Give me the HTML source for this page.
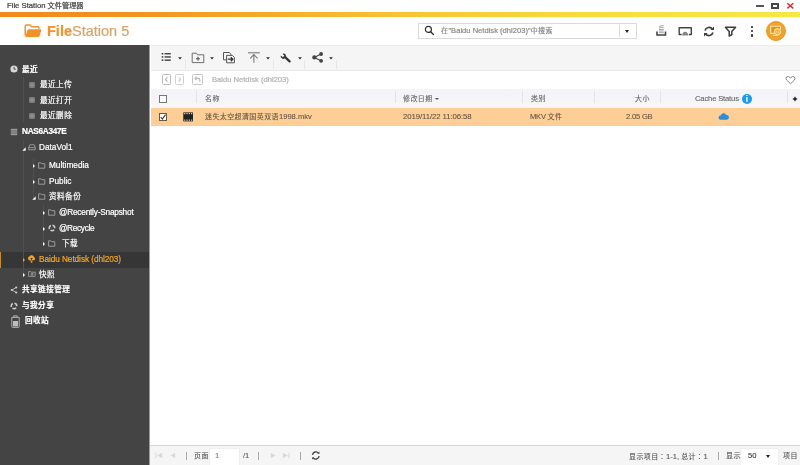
<!DOCTYPE html>
<html lang="zh-CN">
<head>
<meta charset="utf-8">
<title>File Station 文件管理器</title>
<style>
*{box-sizing:border-box;margin:0;padding:0}
html,body{width:800px;height:465px;overflow:hidden;background:#fff}
body{font-family:"Liberation Sans","Noto Sans CJK SC",sans-serif;font-size:8px;color:#444;position:relative}
.abs{position:absolute}
.t{position:absolute;white-space:nowrap;line-height:10px;will-change:transform;-webkit-text-stroke:0.2px currentColor}
#gbar{left:0;top:12px;width:800px;height:5px;background:linear-gradient(90deg,#f08a1c 0%,#f29420 18%,#f7c434 50%,#f8dd3a 75%,#f7e844 100%)}
#side{left:0;top:45px;width:150px;height:420px;background:#444;border-right:1px solid #9c9c9c}
#toolbar{left:151px;top:45px;width:649px;height:25.5px;background:#f5f5f5;border-top:1px solid #ebebeb;border-bottom:1px solid #e9e9e9}
#thead{left:151px;top:89px;width:649px;height:19px;background:linear-gradient(#f3f4f8 0%,#f5f5f8 55%,#faf7f5 100%)}
#row{left:151px;top:107.75px;width:649px;height:18px;background:#fdcf97;border-bottom:1.5px solid #f8cfa3}
#footer{left:150px;top:445px;width:650px;height:20px;background:#f5f5f5;border-top:1px solid #d6d6d6}
.st{color:#fff;font-size:8.25px}
.sb{font-weight:bold}
.colsep{position:absolute;top:90.5px;width:1px;height:12.5px;background:#e3e3e3}
.hd{color:#666;font-size:7.6px;-webkit-text-stroke-width:0.1px}
.rw{color:#655442;font-size:7.6px;-webkit-text-stroke-width:0.1px}
.ft{color:#555;font-size:7.6px;-webkit-text-stroke-width:0.1px}
</style>
</head>
<body>
<div class="t" style="left:7px;top:0.6px;font-size:7.7px;color:#3a3a3a">File Station <span style="font-size:7.2px">文件管理器</span></div>
<div id="gbar" class="abs"></div>
<div id="side" class="abs"></div>
<div id="toolbar" class="abs"></div>
<div id="thead" class="abs"></div>
<div id="row" class="abs"></div>
<div id="footer" class="abs"></div>

<svg class="abs" style="left:24px;top:24px" width="18" height="14" viewBox="0 0 18 14">
<path d="M1.2 11.5V2.2Q1.2 1 2.4 1H6l1.6 1.7h6.2q1.2 0 1.2 1.2v0.9" fill="none" stroke="#f0922a" stroke-width="1.5" stroke-linejoin="round"/>
<path d="M4.6 5.2H16.6Q17.6 5.2 17.3 6.2L15.6 12Q15.3 13 14.3 13H2Q0.9 13 1.3 12L3.4 6.2Q3.7 5.2 4.6 5.2Z" fill="#f0922a"/>
</svg>
<div class="t" style="left:47px;top:20.6px;font-size:14.5px;line-height:20px;color:#d8a368"><b style="color:#ef9433">File</b>Station 5</div>
<div class="abs" style="left:418px;top:23px;width:219px;height:16px;border:1px solid #dadada;background:#fff"></div>
<div class="abs" style="left:619px;top:25px;width:1px;height:12px;background:#d8d8d8"></div>
<svg class="abs" style="left:424.2px;top:24.8px" width="11" height="11" viewBox="0 0 12 12"><circle cx="4.8" cy="4.8" r="3.3" fill="none" stroke="#333" stroke-width="1.3"/><path d="M7.3 7.3L10.3 10.3" stroke="#333" stroke-width="1.5" stroke-linecap="round"/></svg>

<div class="t" style="left:441px;top:25.5px;font-size:7.6px;color:#8a8a8a"><span style="font-size:6.96px;letter-spacing:0.44px">在</span>"Baidu Netdisk (dhl203)"<span style="font-size:6.96px;letter-spacing:0.44px">中搜索</span></div>
<div class="abs" style="left:625px;top:30px;width:0;height:0;border-left:2.5px solid transparent;border-right:2.5px solid transparent;border-top:3px solid #222"></div>
<div class="abs" style="left:756px;top:5px;width:8px;height:2px;background:#555"></div>
<div class="abs" style="left:771px;top:3px;width:8px;height:6px;border:2px solid #484848"></div>
<svg class="abs" style="left:786px;top:2px" width="9" height="9" viewBox="0 0 9 9"><path d="M1.3 1.2L7.3 6.4M7.3 1.2L1.3 6.4" stroke="#cc3338" stroke-width="1.4"/></svg>
<svg class="abs" style="left:655px;top:24px" width="13" height="13" viewBox="0 0 13 13" fill="none">
<path d="M4 2.3L8.6 1.4M3.9 3.9L8.8 3.3M3.9 5.5H8.8M3.9 7.1H8.8M3.9 8.7H8.8" stroke="#9a9a9a" stroke-width="0.9"/><path d="M2 7.6V11H10.5V7.6" stroke="#444" stroke-width="1.6"/></svg>
<svg class="abs" style="left:677px;top:26px" width="16" height="11" viewBox="0 0 16 11" fill="none">
<path d="M4.6 8.5H2.2V1.8H14.3V8.5H11.9" stroke="#444" stroke-width="1.4" stroke-linejoin="round"/><path d="M5.1 9.5Q5.6 5.8 8.2 5.8Q10.8 5.8 11.3 9.5Z" fill="#858585"/></svg>
<svg class="abs" style="left:703px;top:26px" width="12" height="11" viewBox="0 0 12 11" fill="none" stroke="#3e3e3e" stroke-width="1.7">
<path d="M2 4.4A4.2 4.2 0 0 1 9.2 2.9"/><path d="M10 6.6A4.2 4.2 0 0 1 2.8 8.1"/><path d="M11 0.4v3.6H7.4z" fill="#3e3e3e" stroke="none"/><path d="M1 10.6V7h3.6z" fill="#3e3e3e" stroke="none"/></svg>
<svg class="abs" style="left:724px;top:26px" width="13" height="11" viewBox="0 0 13 11" fill="none" stroke="#3e3e3e" stroke-width="1.5" stroke-linejoin="round">
<path d="M1.4 1.2h10.2L7.8 5.6v3.2l-2.6 1.2V5.6z"/></svg>
<div class="abs" style="left:750.5px;top:25.5px;width:2.7px;height:2.7px;background:#333;border-radius:0.8px"></div>
<div class="abs" style="left:750.5px;top:29.8px;width:2.7px;height:2.7px;background:#333;border-radius:0.8px"></div>
<div class="abs" style="left:750.5px;top:34.2px;width:2.7px;height:2.7px;background:#333;border-radius:0.8px"></div>
<div class="abs" style="left:766px;top:21px;width:20px;height:20px;border-radius:10px;background:#f0a02c;border:1px solid #ea9824"></div>
<svg class="abs" style="left:769px;top:24px" width="14" height="14" viewBox="0 0 14 14" fill="none" stroke="#ffe6a0" stroke-width="1.1">
<path d="M5.4 9.4H1.7V2.3H11.5V5.6" fill="#e3921f"/><circle cx="8.5" cy="7.8" r="2.9" fill="#eda02e"/><circle cx="8.6" cy="7.9" r="1.1" stroke-width="0.7"/><path d="M3.6 11.3H8.8" stroke-width="0.9"/></svg>

<div class="abs" style="left:0;top:252px;width:149px;height:15.5px;background:#363636"></div><div class="abs" style="left:0;top:252px;width:1px;height:15.5px;background:#c48f2c"></div>
<div class="abs" style="left:23px;top:140px;width:1px;height:136px;background:#4f4f4f"></div>
<div class="abs" style="left:23px;top:77px;width:1px;height:45px;background:#4f4f4f"></div>
<div class="abs" style="left:33px;top:158px;width:1px;height:40px;background:#505050"></div>
<div class="abs" style="left:43px;top:205px;width:1px;height:40px;background:#505050"></div>
<svg class="abs" style="left:10px;top:65px" width="8" height="8" viewBox="0 0 8 8"><circle cx="4" cy="4" r="3.6" fill="#d8d8d8"/><path d="M4 1.8V4.2H5.8" stroke="#444" stroke-width="0.9" fill="none"/></svg>
<div class="t st sb" style="left:22px;top:65.2px;"><span style="font-size:7.57px;letter-spacing:0.48px">最近</span></div>
<div class="abs" style="left:29px;top:81.7px;width:6px;height:6px;background:radial-gradient(#8e8e8e 20%,#6c6c6c 100%);border-radius:1.2px"></div>
<div class="t st" style="left:39.7px;top:80.10000000000001px;"><span style="font-size:7.57px;letter-spacing:0.48px">最近上传</span></div>
<div class="abs" style="left:29px;top:97.2px;width:6px;height:6px;background:radial-gradient(#8e8e8e 20%,#6c6c6c 100%);border-radius:1.2px"></div>
<div class="t st" style="left:39.7px;top:95.60000000000001px;"><span style="font-size:7.57px;letter-spacing:0.48px">最近打开</span></div>
<div class="abs" style="left:29px;top:112.5px;width:6px;height:6px;background:radial-gradient(#8e8e8e 20%,#6c6c6c 100%);border-radius:1.2px"></div>
<div class="t st" style="left:39.7px;top:110.9px;"><span style="font-size:7.57px;letter-spacing:0.48px">最近删除</span></div>
<svg class="abs" style="left:10px;top:127.5px" width="8" height="8" viewBox="0 0 8 8"><rect x="0.8" y="0.8" width="6.4" height="6.4" fill="#9a9a9a"/><path d="M0.8 3h6.4M0.8 5.1h6.4" stroke="#444" stroke-width="0.6"/></svg>
<div class="t st sb" style="left:22px;top:127.4px;letter-spacing:-0.3px">NAS6A347E</div>
<svg class="abs" style="left:22.0px;top:147.0px" width="4" height="4" viewBox="0 0 4 4"><path d="M3.7 0.3V3.7H0.3z" fill="#fff"/></svg>
<svg class="abs" style="left:28px;top:144.3px" width="8" height="7" viewBox="0 0 9 8"><path d="M0.7 4.2L2 0.9h5L8.3 4.2V6.6H0.7z M0.7 4.2H8.3" fill="none" stroke="#a8a8a8" stroke-width="0.9"/></svg>
<div class="t st" style="left:39px;top:143.4px;">DataVol1</div>
<div class="abs" style="left:33px;top:164.3px;width:0;height:0;border-top:2px solid transparent;border-bottom:2px solid transparent;border-left:2.5px solid #fff"></div>
<svg class="abs" style="left:38px;top:162.0px" width="8" height="7" viewBox="0 0 8 7"><path d="M0.6 6.2V0.8H2.8L3.6 1.7H6.8V6.2Z" fill="none" stroke="#a4a4a4" stroke-width="0.9"/></svg>
<div class="t st" style="left:49.2px;top:160.9px;">Multimedia</div>
<div class="abs" style="left:33px;top:180.10000000000002px;width:0;height:0;border-top:2px solid transparent;border-bottom:2px solid transparent;border-left:2.5px solid #fff"></div>
<svg class="abs" style="left:38px;top:177.8px" width="8" height="7" viewBox="0 0 8 7"><path d="M0.6 6.2V0.8H2.8L3.6 1.7H6.8V6.2Z" fill="none" stroke="#a4a4a4" stroke-width="0.9"/></svg>
<div class="t st" style="left:49.2px;top:176.70000000000002px;">Public</div>
<svg class="abs" style="left:32.0px;top:196.0px" width="4" height="4" viewBox="0 0 4 4"><path d="M3.7 0.3V3.7H0.3z" fill="#fff"/></svg>
<svg class="abs" style="left:38px;top:193.0px" width="8" height="7" viewBox="0 0 8 7"><path d="M0.6 6.2V0.8H2.8L3.6 1.7H6.8V6.2Z" fill="none" stroke="#a4a4a4" stroke-width="0.9"/></svg>
<div class="t st" style="left:49.2px;top:191.9px;"><span style="font-size:7.57px;letter-spacing:0.48px">资料备份</span></div>
<div class="abs" style="left:43px;top:211.10000000000002px;width:0;height:0;border-top:2px solid transparent;border-bottom:2px solid transparent;border-left:2.5px solid #fff"></div>
<svg class="abs" style="left:48px;top:208.8px" width="8" height="7" viewBox="0 0 8 7"><path d="M0.6 6.2V0.8H2.8L3.6 1.7H6.8V6.2Z" fill="none" stroke="#a4a4a4" stroke-width="0.9"/></svg>
<div class="t st" style="left:59.3px;top:208.20000000000002px;letter-spacing:-0.2px">@Recently-Snapshot</div>
<div class="abs" style="left:43px;top:226.5px;width:0;height:0;border-top:2px solid transparent;border-bottom:2px solid transparent;border-left:2.5px solid #fff"></div>
<svg class="abs" style="left:47.5px;top:224px" width="8" height="8" viewBox="0 0 8 8"><path d="M4.47 1.34A2.7 2.7 0 0 1 6.69 4.24M6.07 5.74A2.7 2.7 0 0 1 2.45 6.21M1.46 4.92A2.7 2.7 0 0 1 2.86 1.55" fill="none" stroke="#cdcdcd" stroke-width="1.5"/></svg>
<div class="t st" style="left:59.3px;top:223.6px;letter-spacing:-0.3px">@Recycle</div>
<div class="abs" style="left:43px;top:241.8px;width:0;height:0;border-top:2px solid transparent;border-bottom:2px solid transparent;border-left:2.5px solid #fff"></div>
<svg class="abs" style="left:48px;top:239.5px" width="8" height="7" viewBox="0 0 8 7"><path d="M0.6 6.2V0.8H2.8L3.6 1.7H6.8V6.2Z" fill="none" stroke="#a4a4a4" stroke-width="0.9"/></svg>
<div class="t st" style="left:62px;top:238.9px;"><span style="font-size:7.57px;letter-spacing:0.48px">下载</span></div>
<div class="abs" style="left:23px;top:257.8px;width:0;height:0;border-top:2px solid transparent;border-bottom:2px solid transparent;border-left:2.5px solid #f5a623"></div>
<svg class="abs" style="left:27px;top:254.5px" width="9" height="8" viewBox="0 0 9 8"><path d="M2.2 5.2A1.9 1.9 0 0 1 2.4 1.6A2.5 2.5 0 0 1 7 2.2A1.6 1.6 0 0 1 7 5.2Z" fill="#f5a623"/><path d="M4.5 4.6V7.6" stroke="#f5a623" stroke-width="1.6"/><path d="M4.5 5.6V3M3.3 4.1L4.5 2.9L5.7 4.1" stroke="#3a3326" stroke-width="0.8" fill="none"/></svg>
<div class="t st" style="left:39px;top:254.70000000000002px;color:#f5a623;letter-spacing:-0.07px">Baidu Netdisk (dhl203)</div>
<div class="abs" style="left:23px;top:273.1px;width:0;height:0;border-top:2px solid transparent;border-bottom:2px solid transparent;border-left:2.5px solid #fff"></div>
<svg class="abs" style="left:27.5px;top:271px" width="8" height="6" viewBox="0 0 8 6"><path d="M0.6 5.4V0.6H2.6L3.2 1.2H7.2V5.4Z M3.2 2.4H5V4.2H3.2Z" fill="none" stroke="#9c9c9c" stroke-width="0.9"/></svg>
<div class="t st" style="left:39px;top:269.7px;"><span style="font-size:7.57px;letter-spacing:0.48px">快照</span></div>
<svg class="abs" style="left:10px;top:286px" width="8" height="8" viewBox="0 0 8 8"><path d="M6 1.6L2 4L6 6.4" fill="none" stroke="#cfcfcf" stroke-width="0.8"/><circle cx="6.2" cy="1.5" r="1.1" fill="#cfcfcf"/><circle cx="1.8" cy="4" r="1.1" fill="#cfcfcf"/><circle cx="6.2" cy="6.5" r="1.1" fill="#cfcfcf"/></svg>
<div class="t st sb" style="left:22px;top:285.2px;"><span style="font-size:7.57px;letter-spacing:0.48px">共享链接管理</span></div>
<svg class="abs" style="left:10px;top:301.5px" width="8" height="8" viewBox="0 0 8 8"><path d="M4.47 1.34A2.7 2.7 0 0 1 6.69 4.24M6.07 5.74A2.7 2.7 0 0 1 2.45 6.21M1.46 4.92A2.7 2.7 0 0 1 2.86 1.55" fill="none" stroke="#cdcdcd" stroke-width="1.5"/></svg>
<div class="t st sb" style="left:22px;top:300.7px;"><span style="font-size:7.57px;letter-spacing:0.48px">与我分享</span></div>
<svg class="abs" style="left:11px;top:315px" width="9" height="13" viewBox="0 0 9 13"><path d="M0.8 2.4H8.2V11.6Q8.2 12.4 7.4 12.4H1.6Q0.8 12.4 0.8 11.6Z" fill="none" stroke="#bdbdbd" stroke-width="0.9"/><path d="M2.8 2.2V0.8H6.2V2.2" fill="none" stroke="#bdbdbd" stroke-width="0.9"/><rect x="2" y="6" width="5" height="5.4" fill="#bdbdbd"/></svg>
<div class="t st sb" style="left:24.5px;top:316.4px;"><span style="font-size:7.57px;letter-spacing:0.48px">回收站</span></div>
<svg class="abs" style="left:161px;top:52px" width="11" height="10" viewBox="0 0 11 10"><g fill="#333"><rect x="0.7" y="1" width="1.6" height="1.5"/><rect x="0.7" y="4.2" width="1.6" height="1.5"/><rect x="0.7" y="7.4" width="1.6" height="1.5"/><rect x="3.6" y="1.1" width="6.2" height="1.3"/><rect x="3.6" y="4.3" width="6.2" height="1.3"/><rect x="3.6" y="7.5" width="6.2" height="1.3"/></g></svg>
<svg class="abs" style="left:178px;top:56.5px" width="4" height="3" viewBox="0 0 4 3"><path d="M0.2 0.2H3.8L2 2.6Z" fill="#222"/></svg>
<svg class="abs" style="left:191px;top:52px" width="14" height="12" viewBox="0 0 14 12" fill="none" stroke="#6e6e6e" stroke-width="1"><path d="M1.2 10.6V1.2H5.4L6.6 2.8H12.8V10.6Z"/><path d="M7 4.8V8.8M5 6.8H9" stroke="#555" stroke-width="1.1"/></svg>
<svg class="abs" style="left:209.5px;top:56.5px" width="4" height="3" viewBox="0 0 4 3"><path d="M0.2 0.2H3.8L2 2.6Z" fill="#222"/></svg>
<svg class="abs" style="left:222px;top:51px" width="14" height="13" viewBox="0 0 14 13" fill="none" stroke="#555" stroke-width="1"><path d="M1.5 8.8V1.5H7.2L9 3.3V8.8Z" fill="#f4f4f4"/><path d="M4.6 11.8V4.4H10.4L12.4 6.4V11.8Z" fill="#f4f4f4"/><path d="M5.8 8.2H10.6M8.8 6.2L10.8 8.2L8.8 10.2" stroke="#333" stroke-width="1.3"/></svg>
<svg class="abs" style="left:247px;top:51px" width="14" height="13" viewBox="0 0 14 13" fill="none" stroke="#7a7a7a" stroke-width="1.1"><path d="M1 1.8H12.8"/><path d="M6.9 11.8V3.6M3.2 7.4L6.9 3.6L10.6 7.4"/></svg>
<svg class="abs" style="left:265.6px;top:56.5px" width="4" height="3" viewBox="0 0 4 3"><path d="M0.2 0.2H3.8L2 2.6Z" fill="#222"/></svg>
<svg class="abs" style="left:280px;top:52.6px" width="12" height="11" viewBox="0 0 12 11"><path d="M9.6 8.4L5.4 4.4" stroke="#333" stroke-width="2.2" stroke-linecap="round"/><path d="M5.8 3.2A2.4 2.4 0 0 0 3 0.9L4.4 2.4L3.9 3.9L2.3 4.3L1 2.9A2.4 2.4 0 0 0 4.2 5.5Z" fill="#333" stroke="#333" stroke-width="0.6"/></svg>
<svg class="abs" style="left:297.5px;top:56.5px" width="4" height="3" viewBox="0 0 4 3"><path d="M0.2 0.2H3.8L2 2.6Z" fill="#222"/></svg>
<svg class="abs" style="left:312px;top:52px" width="12" height="11" viewBox="0 0 12 11"><path d="M9 2L2.3 5.4L9 8.8" fill="none" stroke="#444" stroke-width="1.1"/><circle cx="9.1" cy="2" r="1.9" fill="#444"/><circle cx="2.3" cy="5.4" r="2.1" fill="#444"/><circle cx="9.1" cy="8.8" r="1.9" fill="#444"/></svg>
<svg class="abs" style="left:328.5px;top:56.5px" width="4" height="3" viewBox="0 0 4 3"><path d="M0.2 0.2H3.8L2 2.6Z" fill="#222"/></svg>
<div class="abs" style="left:185px;top:59.5px;width:1px;height:9.5px;background:#e6e6e6"></div>
<div class="abs" style="left:273px;top:59.5px;width:1px;height:9.5px;background:#e6e6e6"></div>
<div class="abs" style="left:304px;top:59.5px;width:1px;height:9.5px;background:#e6e6e6"></div>
<div class="abs" style="left:336px;top:59.5px;width:1px;height:9.5px;background:#e6e6e6"></div>
<div class="abs" style="left:162px;top:74px;width:9px;height:11px;border:1px solid #bfbfbf;border-radius:1.5px"></div>
<div class="abs" style="left:175px;top:74px;width:9px;height:11px;border:1px solid #cfcfcf;border-radius:1.5px"></div>
<div class="abs" style="left:192px;top:74px;width:11px;height:11px;border:1px solid #c6c6c6;border-radius:1.5px"></div>
<svg class="abs" style="left:162px;top:74px" width="9" height="11" viewBox="0 0 9 11"><path d="M5.4 3.4L3.4 5.5L5.4 7.6" fill="none" stroke="#b4b4b4" stroke-width="1.2"/></svg>
<svg class="abs" style="left:175px;top:74px" width="9" height="11" viewBox="0 0 9 11"><path d="M3.6 3.4L5.6 5.5L3.6 7.6" fill="none" stroke="#cacaca" stroke-width="1.2"/></svg>
<svg class="abs" style="left:192px;top:74px" width="11" height="11" viewBox="0 0 11 11"><path d="M3 4.4H6.2Q7.8 4.4 7.8 6V7.8M4.6 2.8L3 4.4L4.6 6" fill="none" stroke="#bababa" stroke-width="1.2"/></svg>
<div class="t" style="left:212px;top:74.5px;font-size:7.6px;color:#b2b2b2">Baidu Netdisk (dhl203)</div>
<svg class="abs" style="left:785px;top:75px" width="11" height="10" viewBox="0 0 11 10"><path d="M5.5 8.8L1.6 5Q0.4 3.4 1.6 2Q3.4 0.6 5.5 2.8Q7.6 0.6 9.4 2Q10.6 3.4 9.4 5Z" fill="none" stroke="#777" stroke-width="0.9" stroke-linejoin="round"/></svg>
<div class="colsep" style="left:196px"></div>
<div class="colsep" style="left:395px"></div>
<div class="colsep" style="left:522px"></div>
<div class="colsep" style="left:594px"></div>
<div class="colsep" style="left:660px"></div>
<div class="colsep" style="left:787px"></div>
<div class="abs" style="left:159px;top:95px;width:8px;height:8px;border:1px solid #777;background:#fff"></div>
<div class="t hd" style="left:204.7px;top:93.7px;"><span style="font-size:6.96px;letter-spacing:0.44px">名称</span></div>
<div class="t hd" style="left:403.2px;top:93.7px;"><span style="font-size:6.96px;letter-spacing:0.44px">修改日期</span></div>
<div class="abs" style="left:435.1px;top:97.6px;width:0;height:0;border-left:2.4px solid transparent;border-right:2.4px solid transparent;border-top:2.6px solid #555"></div>
<div class="t hd" style="left:531px;top:93.7px;"><span style="font-size:6.96px;letter-spacing:0.44px">类别</span></div>
<div class="t hd" style="left:635px;top:93.7px;"><span style="font-size:6.96px;letter-spacing:0.44px">大小</span></div>
<div class="t hd" style="left:694.5px;top:93.7px;letter-spacing:-0.15px">Cache Status</div>
<div class="abs" style="left:741.7px;top:93.7px;width:10px;height:10px;border-radius:5px;background:#1e9be8"></div>
<div class="t" style="left:741.7px;top:93.7px;width:10px;text-align:center;font-size:8.5px;line-height:10.4px;color:#fff;font-weight:bold;-webkit-text-stroke-width:0">i</div>
<svg class="abs" style="left:792px;top:96px" width="6" height="6" viewBox="0 0 6 6"><path d="M3 0.3L3.9 2.1L5.7 3L3.9 3.9L3 5.7L2.1 3.9L0.3 3L2.1 2.1Z" fill="#222"/></svg>
<div class="abs" style="left:159px;top:113px;width:8px;height:8px;border:1px solid #6a5a4a;background:#fff"></div>
<svg class="abs" style="left:159px;top:113px" width="8" height="8" viewBox="0 0 8 8"><path d="M1.7 4.2L3.4 6L6.5 1.7" fill="none" stroke="#4a4036" stroke-width="1.2"/></svg>
<svg class="abs" style="left:182.6px;top:112.1px" width="10.5" height="9.8" viewBox="0 0 11 10"><rect x="0.3" y="0.3" width="10.4" height="9.4" fill="#222"/><g fill="#f3dcc0"><rect x="1.2" y="1" width="1.3" height="1.2"/><rect x="3.6" y="1" width="1.3" height="1.2"/><rect x="6" y="1" width="1.3" height="1.2"/><rect x="8.4" y="1" width="1.3" height="1.2"/><rect x="1.2" y="7.8" width="1.3" height="1.2"/><rect x="3.6" y="7.8" width="1.3" height="1.2"/><rect x="6" y="7.8" width="1.3" height="1.2"/><rect x="8.4" y="7.8" width="1.3" height="1.2"/></g></svg>
<div class="t rw" style="left:205.2px;top:111.5px;"><span style="font-size:6.96px;letter-spacing:0.44px">迷失太空超清国英双语</span>1998.mkv</div>
<div class="t rw" style="left:402.8px;top:111.5px;font-size:7.8px;letter-spacing:-0.1px">2019/11/22 11:06:58</div>
<div class="t rw" style="left:530.4px;top:111.5px;letter-spacing:-0.25px">MKV <span style="font-size:6.96px;letter-spacing:0.44px">文件</span></div>
<div class="t rw" style="left:625.5px;top:111.5px;letter-spacing:-0.2px">2.05 GB</div>
<svg class="abs" style="left:718.3px;top:112.3px" width="11.5" height="8.4" viewBox="0 0 12 9"><path d="M2.8 8.4A2.3 2.3 0 0 1 2.6 3.8A3.3 3.3 0 0 1 8.8 3.2A2.6 2.6 0 0 1 9.2 8.4Z" fill="#2b8edb"/></svg>
<svg class="abs" style="left:155px;top:452px" width="8" height="7" viewBox="0 0 8 7"><path d="M1 0.8V6.2" stroke="#d8d8d8" stroke-width="1"/><path d="M7.2 0.8V6.2L2.2 3.5Z" fill="#d8d8d8"/></svg>
<svg class="abs" style="left:170px;top:452px" width="6" height="7" viewBox="0 0 6 7"><path d="M5.2 0.8V6.2L0.6 3.5Z" fill="#d8d8d8"/></svg>
<svg class="abs" style="left:270px;top:452px" width="6" height="7" viewBox="0 0 6 7"><path d="M0.8 0.8V6.2L5.4 3.5Z" fill="#d8d8d8"/></svg>
<svg class="abs" style="left:282px;top:452px" width="8" height="7" viewBox="0 0 8 7"><path d="M7 0.8V6.2" stroke="#d8d8d8" stroke-width="1"/><path d="M0.8 0.8V6.2L5.8 3.5Z" fill="#d8d8d8"/></svg>
<div class="abs" style="left:186px;top:452px;width:1px;height:8px;background:#a8a8a8"></div>
<div class="abs" style="left:257.5px;top:452px;width:1px;height:8px;background:#a8a8a8"></div>
<div class="abs" style="left:300px;top:452px;width:1px;height:8px;background:#a8a8a8"></div>
<div class="abs" style="left:717.5px;top:452px;width:1px;height:8px;background:#a8a8a8"></div>
<div class="t ft" style="left:194px;top:451px;"><span style="font-size:6.96px;letter-spacing:0.44px">页面</span></div>
<div class="abs" style="left:209px;top:448px;width:31px;height:17px;background:#fff;border:1px solid #efefef;border-bottom:none"></div>
<div class="t ft" style="left:215px;top:451px;color:#3d8fd0">1</div>
<div class="t ft" style="left:242.5px;top:451px;">/1</div>
<svg class="abs" style="left:310.5px;top:451.3px" width="9.6" height="9" viewBox="0 0 12 11" fill="none" stroke="#444" stroke-width="1.7"><path d="M1.8 4.6A4.3 4.3 0 0 1 9.4 2.6"/><path d="M10.2 6.4A4.3 4.3 0 0 1 2.6 8.4"/><path d="M10.6 0.6v2.8H7.8z" fill="#444" stroke="none"/><path d="M1.4 10.4V7.6h2.8z" fill="#444" stroke="none"/></svg>
<div class="t ft" style="left:628.5px;top:451px;"><span style="font-size:6.96px;letter-spacing:0.44px">显示项目<span lang="zh-TW" style="font-family:'Noto Sans CJK TC',sans-serif">：</span></span>1-1, <span style="font-size:6.96px;letter-spacing:0.44px">总计<span lang="zh-TW" style="font-family:'Noto Sans CJK TC',sans-serif">：</span></span>1</div>
<div class="t ft" style="left:726px;top:451px;"><span style="font-size:6.96px;letter-spacing:0.44px">显示</span></div>
<div class="abs" style="left:740px;top:448px;width:39px;height:17px;background:#fff;border:1px solid #efefef;border-bottom:none"></div>
<div class="t ft" style="left:747.5px;top:451px;color:#333">50</div>
<div class="abs" style="left:766.3px;top:455.3px;width:0;height:0;border-left:2.8px solid transparent;border-right:2.8px solid transparent;border-top:3px solid #222"></div>
<div class="t ft" style="left:782.5px;top:451px;"><span style="font-size:6.96px;letter-spacing:0.44px">项目</span></div>
</body>
</html>
